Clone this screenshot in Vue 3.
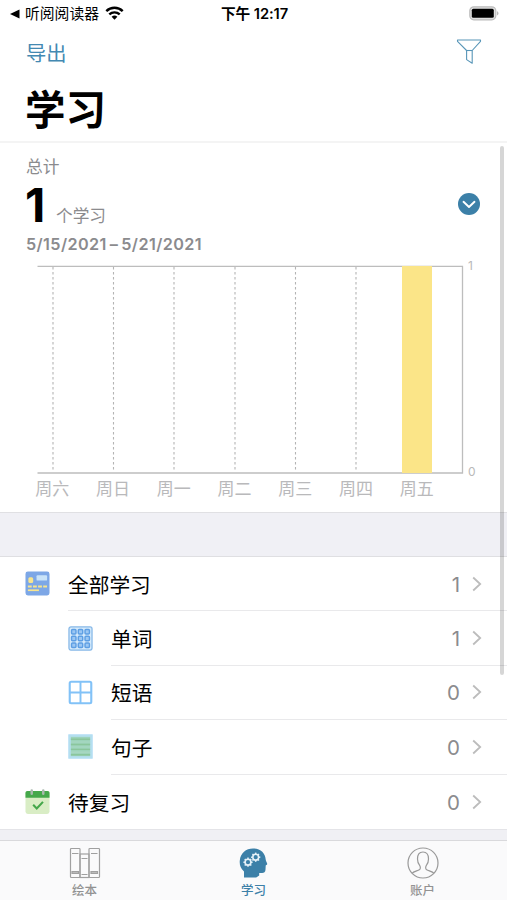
<script setup>
const days = ['周六', '周日', '周一', '周二', '周三', '周四', '周五']
const gridX = [16, 76.5, 137, 198, 258.5, 319]
const rows = [
  { label: '全部学习', count: 1, icon: 'card', nested: false },
  { label: '单词', count: 1, icon: 'grid', nested: true },
  { label: '短语', count: 0, icon: 'window', nested: true },
  { label: '句子', count: 0, icon: 'lines', nested: true },
  { label: '待复习', count: 0, icon: 'calendar', nested: false },
]
const teeth = [0, 45, 90, 135, 180, 225, 270, 315]
const gears = [{ x: 10, y: 15.2 }, { x: 17.7, y: 10.2 }]
</script>

<template>
  <div class="screen">
    <div class="status">
      <div class="back">
        <svg class="tri" width="10" height="10" viewBox="0 0 10 10"><path d="M0 5 9.5 .5v9z" /></svg>
        <span>听阅阅读器</span>
        <svg class="wifi" width="19" height="14" viewBox="0 0 19 14">
          <path d="M1.3 5.1a12 12 0 0 1 16.4 0" fill="none" stroke="#000" stroke-width="2.5" />
          <path d="M4.3 8.4a7.6 7.6 0 0 1 10.4 0" fill="none" stroke="#000" stroke-width="2.4" />
          <path d="M6.6 10.8a4.2 4.2 0 0 1 5.8 0L9.5 13.7z" />
        </svg>
      </div>
      <div class="time">下午 12:17</div>
      <svg class="battery" width="31" height="15" viewBox="0 0 31 15">
        <rect x=".8" y=".8" width="26" height="13" rx="4" fill="#e0e0e0" stroke="#bcbcbc" stroke-width="1.2" />
        <rect x="2.8" y="2.8" width="22" height="9" rx="1.5" />
        <path d="M28.3 5q2.2 2.3 0 4.6z" fill="#999" />
      </svg>
    </div>

    <div class="nav">
      <span class="export">导出</span>
      <svg width="26" height="27" viewBox="0 0 26 27" fill="none" stroke="#5896b8" stroke-width="1.1" stroke-linejoin="round">
        <path d="M1.5 2h23v1.3L16.2 12.5v12.7l-5.6-3.6v-9.1L1.5 3.3z" />
        <path d="M10.6 12.5h5.6" />
      </svg>
    </div>
    <h1>学习</h1>

    <section class="summary">
      <div class="total">总计</div>
      <div class="figure">
        <span class="num">1</span><span class="unit">个学习</span>
        <svg class="toggle" width="22" height="22" viewBox="0 0 22 22">
          <circle cx="11" cy="11" r="11" fill="#3c80a8" />
          <path d="m5.5 8.8 5.5 5.2 5.5-5.2" fill="none" stroke="#fff" stroke-width="1.9" stroke-linecap="round" stroke-linejoin="round" />
        </svg>
      </div>
      <div class="range"><span>5/15/2021</span><span>–</span><span>5/21/2021</span></div>
      <div class="chart">
        <svg width="427" height="209" viewBox="0 0 427 209">
          <path v-for="x in gridX" :key="x" :d="`M${x} 2V207`" stroke="#b4b4b4" stroke-width="1.1" stroke-dasharray="2.4 2.6" />
          <path d="M.5 1.3H425.5V208H.5" fill="none" stroke="#bdbdbd" stroke-width="1.3" />
          <rect x="365" y="1" width="30" height="207" fill="#fbe588" />
        </svg>
        <div class="axis"><span>1</span><span>0</span></div>
      </div>
      <div class="days"><span v-for="d in days" :key="d">{{ d }}</span></div>
    </section>

    <div class="gap"></div>

    <div class="list">
      <div v-for="r in rows" :key="r.label" class="row" :class="{ nested: r.nested }">
        <svg v-if="r.icon === 'card'" class="icon" viewBox="0 0 26 26">
          <rect x=".5" y=".5" width="25" height="25" rx="2.5" fill="#7da7e6" />
          <rect x="3.5" y="6.5" width="5" height="6" rx="1.6" fill="#f8e58e" />
          <rect x="12" y="4.5" width="11" height="5.5" rx="1" fill="#c9e3f8" />
          <path d="M3 16.2h20" stroke="#f8e58e" stroke-width="2" stroke-dasharray="4 1.3" />
          <path d="M3 20h11.5" stroke="#f8e58e" stroke-width="1.8" />
        </svg>
        <svg v-else-if="r.icon === 'grid'" class="icon" viewBox="0 0 26 26">
          <rect x="1" y="1" width="24" height="24" rx="2" fill="#d5eafb" stroke="#86b8e8" stroke-width="1.3" />
          <template v-for="y in 3" :key="y">
            <rect v-for="x in 3" :key="x" :x="x * 7 - 3.3" :y="y * 7 - 3.3" width="4.6" height="4.6" rx="1" fill="#9bc7f3" stroke="#5e9fe4" stroke-width="1.5" />
          </template>
        </svg>
        <svg v-else-if="r.icon === 'window'" class="icon" viewBox="0 0 26 26" fill="none" stroke="#82c2f7">
          <rect x="1.8" y="1.8" width="22.4" height="22.4" rx="1.5" stroke-width="2.2" />
          <path d="M13 2v22M2 13h22" stroke-width="2" />
        </svg>
        <svg v-else-if="r.icon === 'lines'" class="icon" viewBox="0 0 26 26">
          <rect x=".8" y=".8" width="24.4" height="24.4" fill="#b4dfed" stroke="#b5def5" stroke-width="1" />
          <rect x="3" y="3" width="20" height="20" fill="#9dd3ba" />
          <path d="M3 5.5h20M3 11h20M3 16h20M3 21.5h20" stroke="#8bc69c" stroke-width="1.5" />
          <path d="M3 8.3h20M3 13.5h20M3 18.8h20" stroke="#aad9c3" stroke-width="1.2" />
        </svg>
        <svg v-else class="icon" viewBox="0 0 26 26">
          <rect x=".5" y="2" width="25" height="24" rx="2.5" fill="#d9edc5" />
          <path d="M.5 9V4Q.5 2 2.5 2h21q2 0 2 2v5z" fill="#45a84b" />
          <path d="M7 1.5v3.5M19 1.5v3.5" stroke="#a9b9ae" stroke-width="2.6" stroke-linecap="round" />
          <path d="m8.5 16.5 3.7 3.7 6.5-6.8" fill="none" stroke="#43a749" stroke-width="2.2" />
        </svg>
        <div class="body">
          <span class="label">{{ r.label }}</span>
          <span class="count">{{ r.count }}</span>
          <svg class="chev" width="10" height="16" viewBox="0 0 10 16"><path d="m1.2 1.5 7 6.5-7 6.5" fill="none" stroke="#bcbcbc" stroke-width="1.8" /></svg>
        </div>
      </div>
    </div>
    <div class="tail"></div>

    <nav class="tabs">
      <div class="tab">
        <svg width="32" height="32" viewBox="0 0 32 32" fill="none" stroke="#a0a0a0" stroke-width="1.2">
          <rect x="1.5" y="1.5" width="9.5" height="29" rx=".8" /><rect x="11" y="7" width="9" height="23.5" /><rect x="20" y="1.5" width="10.5" height="29" rx=".8" />
          <path d="M3 6.5h6.5M12.5 11.5h6M22 6.5h6.5M12.5 27.5h6" />
          <path d="M3 24.5h6.5v2H3zM22 24.5h6.5v2H22z" fill="#bbb" />
        </svg>
        <span>绘本</span>
      </div>
      <div class="tab active">
        <svg width="32" height="32" viewBox="0 0 32 32">
          <path d="M6 30.5V24.5C2.3 21 1.4 17.5 1.8 13.5 2.5 6 8 1.5 15 1.5c7.5 0 12.3 4.5 12.7 11 .1 2 1.8 3.7 1.5 4.8-.2.9-1.5.7-1.5 1.4l-.2 4.1c-.2 2.4-1.5 3.3-3.7 3.2l-2.6-.1v2.6l-3 2z" fill="#3c80a8" />
          <g v-for="g in gears" :key="g.x" :transform="`translate(${g.x} ${g.y})`" stroke="#e6f1f8" fill="none">
            <circle r="2.9" stroke-width="1.6" />
            <path v-for="t in teeth" :key="t" d="M0-3V-4.6" stroke-width="1.5" :transform="`rotate(${t})`" />
          </g>
        </svg>
        <span>学习</span>
      </div>
      <div class="tab">
        <svg width="32" height="32" viewBox="0 0 32 32" fill="none" stroke="#999" stroke-width="1.2">
          <circle cx="16" cy="16" r="15" />
          <path d="M5 26.3c1.5-1.8 5.4-2.4 7.3-3.5 1.5-.8 1.2-3.2.2-4.7-1.4-1.8-2-3.6-2-6.2C10.5 7.5 12 5 16 5s5.5 2.5 5.5 6.9c0 2.6-.6 4.4-2 6.2-1 1.5-1.3 3.9.2 4.7 1.9 1.1 5.8 1.7 7.3 3.5" />
        </svg>
        <span>账户</span>
      </div>
    </nav>
    <div class="scrollbar"></div>
  </div>
</template>

<style>
body { margin: 0; background: #fff; }
</style>

<style scoped>
.screen {
  position: relative;
  display: flex;
  flex-direction: column;
  width: 507px;
  height: 900px;
  overflow: hidden;
  background: #fff;
  color: #000;
  font-family: Inter, "Noto Sans CJK SC", sans-serif;
}
.screen > * { flex-shrink: 0; }
svg { display: block; }
.status {
  display: grid;
  grid-template-columns: 1fr auto 1fr;
  align-items: center;
  height: 27px;
  padding: 0 7px 0 10px;
  font-size: 14.8px;
  line-height: 27px;
}
.back { display: flex; align-items: center; white-space: nowrap; }
.back span, .time { padding-top: 2px; line-height: 25px; }
.tri { margin-right: 5px; }
.wifi { margin: 0 0 1px 6px; }
.time { margin-right: 1px; font-size: 14.7px; font-weight: 600; letter-spacing: -.1px; }
.battery { justify-self: end; }
.nav {
  display: flex;
  align-items: center;
  justify-content: space-between;
  height: 49px;
  padding: 0 25px 0 26px;
}
.export { padding-top: 1px; color: #4389b2; font-size: 20.3px; }
h1 {
  box-sizing: border-box;
  height: 67px;
  margin: 0;
  padding-left: 25px;
  border-bottom: 2px solid #f4f4f4;
  font-size: 40.5px;
  font-weight: 600;
  line-height: 69px;
}
.summary { height: 369px; color: #8b8b8e; }
.total { height: 37px; padding: 12px 0 0 26px; box-sizing: border-box; font-size: 16.7px; line-height: 25px; }
.figure { display: flex; align-items: baseline; height: 50px; padding: 0 27px 0 25px; }
.num { width: 31px; color: #000; font-size: 47px; font-weight: 700; line-height: 50px; }
.unit { font-size: 16.7px; line-height: 24px; }
.toggle { margin: 0 0 3px auto; align-self: center; }
.range {
  display: flex;
  gap: 3px;
  height: 35px;
  padding-left: 26px;
  font-size: 16.2px;
  font-weight: 600;
  line-height: 28px;
  letter-spacing: .4px;
  white-space: nowrap;
}
.chart { display: flex; height: 209px; padding-left: 37px; }
.axis {
  display: flex;
  flex-direction: column;
  justify-content: space-between;
  margin: -7px 0 -6px 4px;
  color: #b9b9b9;
  font-size: 12px;
  line-height: 16px;
}
.days {
  display: grid;
  grid-template-columns: repeat(7, 1fr);
  width: 425px;
  margin-left: 22px;
  color: #b9b9bb;
  font-size: 17px;
  line-height: 30px;
  text-align: center;
}
.gap { box-sizing: border-box; height: 45px; background: #f0f0f5; border-top: 1px solid #e0e0e3; border-bottom: 1px solid #dfdfe2; }
.row { display: flex; align-items: center; height: 54.4px; padding-left: 25px; }
.row.nested { padding-left: 68px; }
.icon { width: 25px; height: 25px; flex: none; margin: 0 18px 1px 0; }
.body {
  display: flex;
  flex: 1;
  align-items: center;
  box-sizing: border-box;
  height: 100%;
  padding-right: 25px;
  border-bottom: 1px solid #e9e9eb;
}
.row:last-child .body { border: 0; }
.label { flex: 1; font-size: 20.7px; }
.count { padding-top: 1px; color: #8b8b8e; font-size: 20.5px; }
.chev { margin-left: 12px; }
.tail { flex: 1; background: #f0f0f4; border-top: 1px solid #e4e4e8; }
.tabs {
  box-sizing: border-box;
  display: grid;
  grid-template-columns: repeat(3, 1fr);
  height: 60px;
  padding-top: 6px;
  background: #fafafb;
  border-top: 1px solid #d9d9dc;
}
.tab { display: flex; flex-direction: column; align-items: center; color: #929292; font-size: 12.5px; font-weight: 500; line-height: 23px; }
.tab.active { color: #3c80a8; }
.scrollbar { position: absolute; top: 146px; right: 3px; width: 4px; height: 529px; border-radius: 2px; background: rgba(0, 0, 0, .16); }
</style>
